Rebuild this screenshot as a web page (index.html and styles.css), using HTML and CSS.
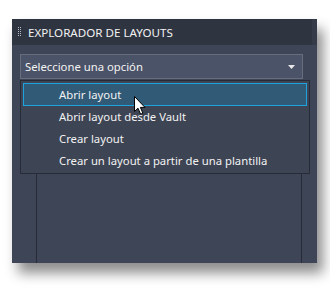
FILE: index.html
```html
<!DOCTYPE html>
<html lang="es">
<head>
  <meta charset="UTF-8">
  <title>Explorador de layouts</title>
  <link rel="stylesheet" href="styles.css">
</head>
<body>
  <div class="panel">
    <div class="title">
      <svg class="grip" width="4" height="10" viewBox="0 0 4 10">
        <rect x="0" y="0" width="1" height="1"/><rect x="2" y="0" width="1" height="1"/>
        <rect x="0" y="2" width="1" height="1"/><rect x="2" y="2" width="1" height="1"/>
        <rect x="0" y="4" width="1" height="1"/><rect x="2" y="4" width="1" height="1"/>
        <rect x="0" y="6" width="1" height="1"/><rect x="2" y="6" width="1" height="1"/>
        <rect x="0" y="8" width="1" height="1"/><rect x="2" y="8" width="1" height="1"/>
      </svg>
      <span>EXPLORADOR DE LAYOUTS</span>
    </div>
    <div class="content">
      <div class="select">
        <span>Seleccione una opción</span>
        <svg class="caret" width="7" height="4" viewBox="0 0 7 4"><path d="M0 0H7L3.5 4Z"/></svg>
      </div>
      <div class="tree"></div>
    </div>
    <ul class="options">
      <li class="active">Abrir layout</li>
      <li>Abrir layout desde Vault</li>
      <li>Crear layout</li>
      <li>Crear un layout a partir de una plantilla</li>
    </ul>
    <svg class="pointer" width="13" height="19" viewBox="0 0 13 19">
      <path d="M0.5 0.5V15.5L4 12.2L6.6 18.2L8.9 17.2L6.4 11.4H11Z" fill="#fff" stroke="#000" stroke-width="1"/>
    </svg>
  </div>
</body>
</html>
```

FILE: styles.css
```css
html, body {
  min-height: 288px;
}
body {
  margin: 0;
  padding: 19px 0 25px 12px;
  box-sizing: border-box;
  background: #fff;
  font-family: 'Noto Sans', 'Open Sans', sans-serif;
  font-size: 11.3px;
  color: #f2f2f2;
}
.panel {
  position: relative;
  width: 305px;
  height: 244px;
  display: flex;
  flex-direction: column;
  background: #3e4556;
  box-shadow: 6px 10px 12px rgba(0, 0, 0, 0.45);
}
.title {
  height: 26px;
  display: flex;
  align-items: center;
  gap: 6px;
  padding-left: 6px;
  font-size: 11.6px;
  background: #2f3441;
  border-right: 5px solid #363b49;
}
.grip {
  fill: #b8bcc6;
}
.content {
  flex: 1;
  display: flex;
  flex-direction: column;
  padding: 9px 14px 0 8px;
}
.select {
  height: 23px;
  display: flex;
  align-items: center;
  justify-content: space-between;
  padding: 0 7px 0 4px;
  background: #4b5368;
  border: 1px solid #676d7d;
}
.caret {
  fill: #e8e8e8;
}
.tree {
  flex: 1;
  margin: 1px 1px 0 16px;
  border-left: 1px solid #262b37;
  border-right: 1px solid #262b37;
}
.options {
  position: absolute;
  top: 61px;
  left: 8px;
  width: 284px;
  margin: 0;
  padding: 2px 2px 1px;
  list-style: none;
  background: #3d4454;
  border: 1px solid #262b37;
}
.options li {
  height: 22px;
  line-height: 22px;
  padding-left: 36px;
  white-space: nowrap;
}
.options li.active {
  height: 21px;
  line-height: 21px;
  padding-left: 35px;
  background: #315a77;
  border: 1px solid #1ea2e0;
}
.pointer {
  position: absolute;
  left: 122px;
  top: 77px;
}
```
